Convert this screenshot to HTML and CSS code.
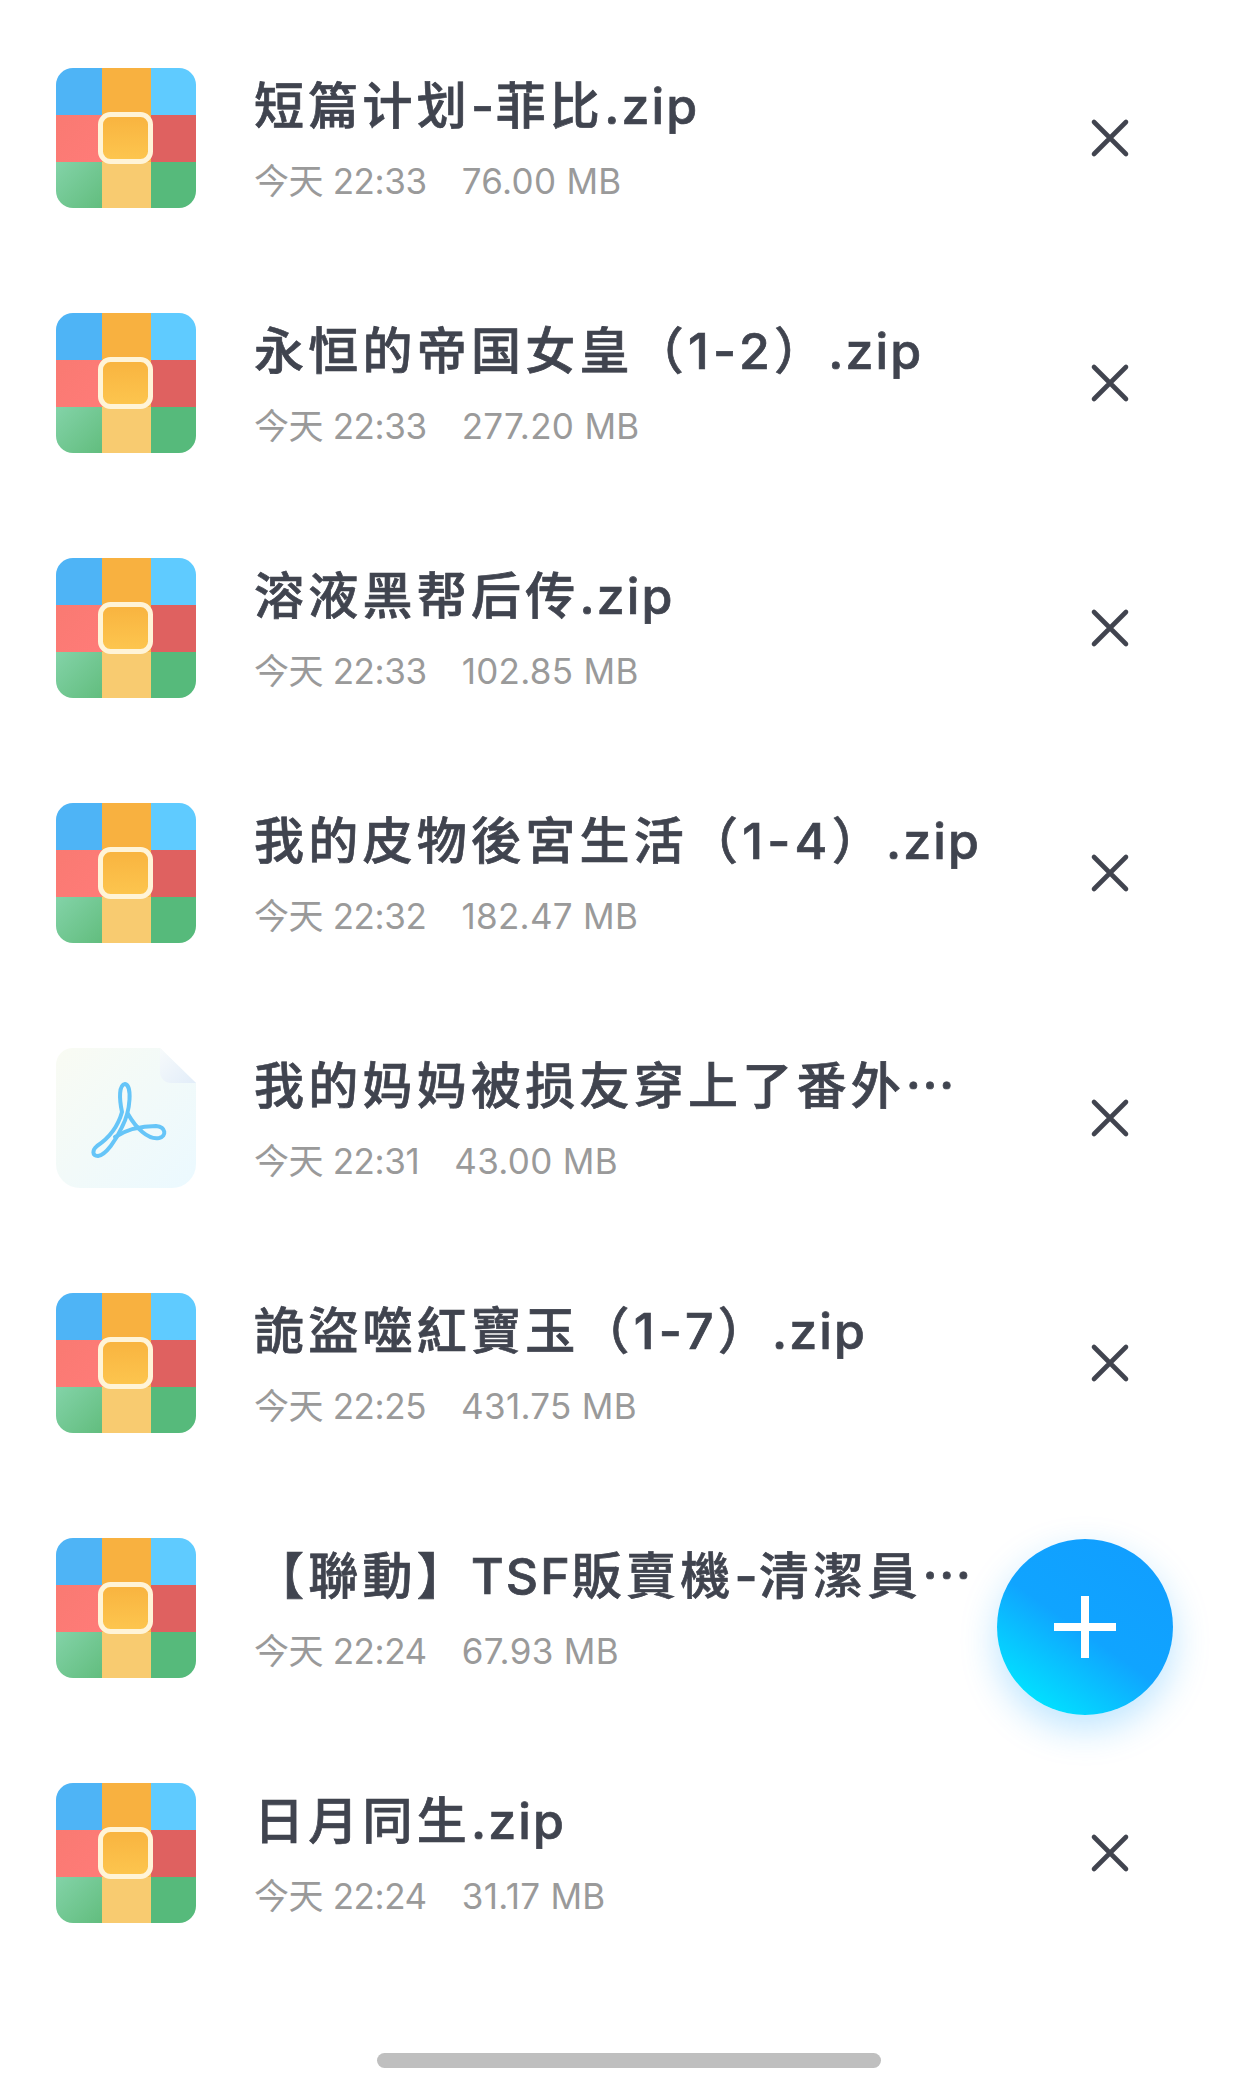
FILE: index.html
```html
<!DOCTYPE html>
<html lang="zh">
<head>
<meta charset="utf-8">
<title>文件列表</title>
<link rel="stylesheet" href="styles.css">
</head>
<body>
<svg class="defs" width="0" height="0" aria-hidden="true">
  <defs>
    <linearGradient id="gc" x1="0" y1="0" x2="0" y2="1"><stop offset="0" stop-color="#f8b33f"/><stop offset="1" stop-color="#fdc64f"/></linearGradient>
    <linearGradient id="gr" x1="0" y1="0" x2="1" y2="1"><stop offset="0" stop-color="#f97a72"/><stop offset="1" stop-color="#ff7b78"/></linearGradient>
    <linearGradient id="gg" x1="0" y1="0" x2="1" y2="1"><stop offset="0" stop-color="#83d3a8"/><stop offset="1" stop-color="#62bd7e"/></linearGradient>
    <linearGradient id="gp" x1="0" y1="0" x2="1" y2="1"><stop offset="0" stop-color="#f9fbf3"/><stop offset="1" stop-color="#ebf9ff"/></linearGradient>
    <linearGradient id="gf" x1="0" y1="0" x2="1" y2="1"><stop offset="0" stop-color="#f7fafb"/><stop offset="1" stop-color="#e2edf9"/></linearGradient>
    <clipPath id="rc"><rect width="140" height="140" rx="17"/></clipPath>
    <symbol id="zip" viewBox="0 0 140 140">
      <g clip-path="url(#rc)">
        <rect x="0" y="0" width="46" height="47" fill="#4eb4f6"/>
        <rect x="46" y="0" width="49" height="47" fill="#f8b140"/>
        <rect x="95" y="0" width="45" height="47" fill="#5fcbff"/>
        <rect x="0" y="47" width="46" height="47" fill="url(#gr)"/>
        <rect x="46" y="47" width="49" height="47" fill="#f8b646"/>
        <rect x="95" y="47" width="45" height="47" fill="#df6160"/>
        <rect x="0" y="94" width="46" height="46" fill="url(#gg)"/>
        <rect x="46" y="94" width="49" height="46" fill="#f8cb70"/>
        <rect x="95" y="94" width="45" height="46" fill="#56ba7b"/>
      </g>
      <rect x="44.500" y="46.500" width="50" height="47" rx="10" fill="url(#gc)" stroke="#fff4d8" stroke-width="5"/>
    </symbol>
    <symbol id="pdf" viewBox="0 0 140 140">
      <path d="M17 0H104L140 35V116a24 24 0 0 1-24 24H24a24 24 0 0 1-24-24V17A17 17 0 0 1 17 0Z" fill="url(#gp)"/>
      <path d="M104 0L140 35H115A11 11 0 0 1 104 24Z" fill="url(#gf)"/>
      <path d="M69 36C63 37 63 50 66 64C61 82 50 92 41 98C36 102 36 108 42 108C50 107 60 92 66 79C75 62 76 37 69 36Z" fill="none" stroke="#66c5f8" stroke-width="4" stroke-linejoin="round"/>
      <path d="M59 89C70 82 85 78 100 78C110 79 111 88 103 90C92 92 80 80 72 66" fill="none" stroke="#66c5f8" stroke-width="4" stroke-linecap="round"/>
    </symbol>
    <symbol id="x" viewBox="0 0 40 40">
      <path d="M4 4L36 36M36 4L4 36" stroke="#41444f" stroke-width="4.600" stroke-linecap="round" fill="none"/>
    </symbol>
  </defs>
</svg>
<main class="screen">
  <ul class="list">
    <li class="row">
      <svg class="file-icon"><use href="#zip"/></svg>
      <div class="info"><div class="title">短篇计划<span class="dash">-</span>菲比<span class="ext">.zip</span></div><div class="meta"><span class="time">今天 22:33</span><span class="size">76.00 MB</span></div></div>
      <svg class="close"><use href="#x"/></svg>
    </li>
    <li class="row">
      <svg class="file-icon"><use href="#zip"/></svg>
      <div class="info"><div class="title">永恒的帝国女皇（1-2）<span class="ext">.zip</span></div><div class="meta"><span class="time">今天 22:33</span><span class="size">277.20 MB</span></div></div>
      <svg class="close"><use href="#x"/></svg>
    </li>
    <li class="row">
      <svg class="file-icon"><use href="#zip"/></svg>
      <div class="info"><div class="title">溶液黑帮后传<span class="ext">.zip</span></div><div class="meta"><span class="time">今天 22:33</span><span class="size">102.85 MB</span></div></div>
      <svg class="close"><use href="#x"/></svg>
    </li>
    <li class="row">
      <svg class="file-icon"><use href="#zip"/></svg>
      <div class="info"><div class="title">我的皮物後宮生活（1-4）<span class="ext">.zip</span></div><div class="meta"><span class="time">今天 22:32</span><span class="size">182.47 MB</span></div></div>
      <svg class="close"><use href="#x"/></svg>
    </li>
    <li class="row">
      <svg class="file-icon"><use href="#pdf"/></svg>
      <div class="info"><div class="title">我的妈妈被损友穿上了番外⋯</div><div class="meta"><span class="time">今天 22:31</span><span class="size">43.00 MB</span></div></div>
      <svg class="close"><use href="#x"/></svg>
    </li>
    <li class="row">
      <svg class="file-icon"><use href="#zip"/></svg>
      <div class="info"><div class="title">詭盜噬紅寶玉（1-7）<span class="ext">.zip</span></div><div class="meta"><span class="time">今天 22:25</span><span class="size">431.75 MB</span></div></div>
      <svg class="close"><use href="#x"/></svg>
    </li>
    <li class="row">
      <svg class="file-icon"><use href="#zip"/></svg>
      <div class="info"><div class="title">【聯動】<span class="ext">TSF</span>販賣機<span class="dash">-</span>清潔員⋯</div><div class="meta"><span class="time">今天 22:24</span><span class="size">67.93 MB</span></div></div>
    </li>
    <li class="row">
      <svg class="file-icon"><use href="#zip"/></svg>
      <div class="info"><div class="title">日月同生<span class="ext">.zip</span></div><div class="meta"><span class="time">今天 22:24</span><span class="size">31.17 MB</span></div></div>
      <svg class="close"><use href="#x"/></svg>
    </li>
  </ul>
  <div class="home-bar"></div>
  <button class="fab" aria-label="新建"><span class="plus"></span></button>
</main>
</body>
</html>
```
FILE: styles.css
```css
* { box-sizing: border-box; }
html, body { margin: 0; padding: 0; background: #fff; }
.defs { position: absolute; }
.screen { position: relative; width: 1260px; height: 2091px; overflow: hidden; padding-top: 15.500px; font-family: "Inter", "Noto Sans CJK SC", sans-serif; }
.list { list-style: none; margin: 0; padding: 0; }
.row { height: 245px; display: flex; align-items: center; padding-left: 56px; position: relative; }
.file-icon { width: 140px; height: 140px; flex: none; filter: blur(.4px); }
.info { margin-left: 58px; flex: 1; min-width: 0; display: flex; flex-direction: column; gap: 17px; }
.title { font-size: 50px; line-height: 68px; font-weight: 500; color: #40444f; letter-spacing: 4.250px; white-space: nowrap; -webkit-text-stroke: 0.7px #40444f; }
.ext { letter-spacing: 2.100px; }
.dash { letter-spacing: 1.500px; }
.meta { display: flex; gap: 35px; font-size: 35px; line-height: 48px; color: #9a9a9a; white-space: nowrap; }
.time { letter-spacing: -.4px; }
.size { letter-spacing: .3px; }
.close { width: 40px; height: 40px; flex: none; margin-right: 130px; }
.home-bar { width: 504px; height: 15px; margin: 77.500px 0 0 377px; background: #bfbfbf; border-radius: 8px; }
.fab { position: absolute; left: 997px; top: 1539px; width: 176px; height: 176px; padding: 0; border: 0; border-radius: 50%; background: linear-gradient(215deg, #119dff 0%, #10a4ff 52%, #00e6ff 90%); box-shadow: 0 14px 36px rgba(20, 160, 255, .28); }
.plus { position: absolute; left: 57px; top: 57px; width: 62px; height: 62px; background: linear-gradient(#fff, #fff) center / 100% 8px no-repeat, linear-gradient(#fff, #fff) center / 8px 100% no-repeat; }
```
